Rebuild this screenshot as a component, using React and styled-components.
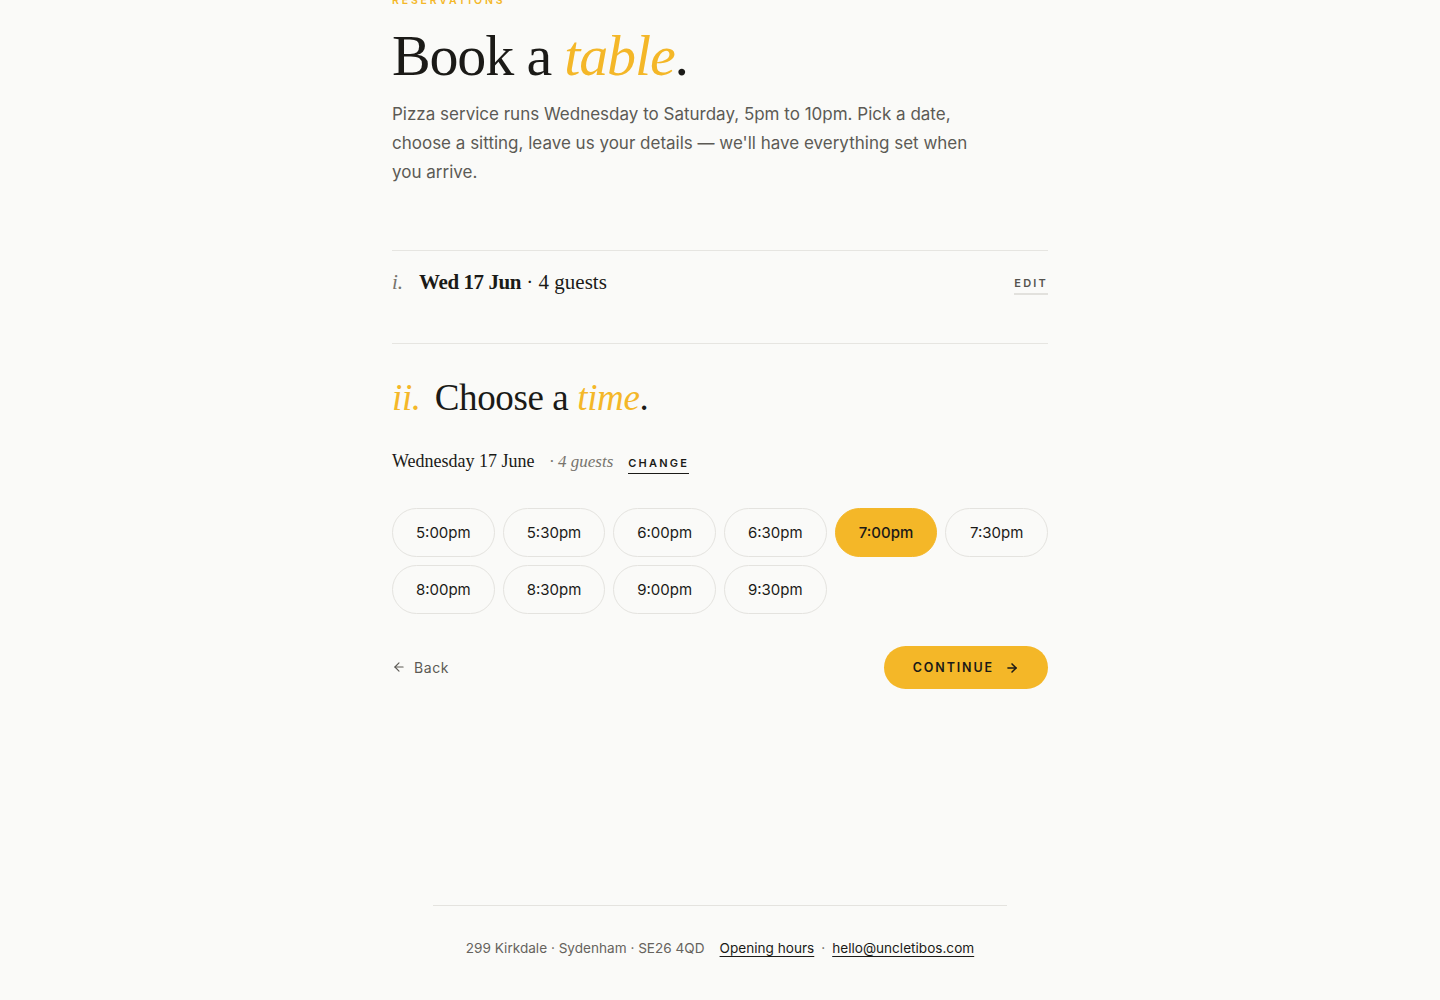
import React, { useState } from "react";
import styled, { createGlobalStyle } from "styled-components";

const ACCENT = "#f4b728";
const INK = "#1b1a17";
const SERIF = `"Liberation Serif", "DejaVu Serif", serif`;
const SANS = `Inter, "Noto Sans", sans-serif`;

const Global = createGlobalStyle`
  html, body { margin: 0; padding: 0; background: #fafaf8; }
  body { font-family: ${SANS}; color: ${INK}; -webkit-font-smoothing: antialiased; }
  * { box-sizing: border-box; }
`;

const Page = styled.div`
  display: flex;
  flex-direction: column;
  align-items: center;
  margin-top: -6px;
`;

const Main = styled.main`
  width: 656px;
  display: flex;
  flex-direction: column;
`;

const Eyebrow = styled.div`
  font-size: 10.5px;
  line-height: 14px;
  font-weight: 600;
  letter-spacing: 0.27em;
  color: ${ACCENT};
  text-transform: uppercase;
`;

const Title = styled.h1`
  margin: 13px 0 0;
  font-family: ${SERIF};
  font-weight: 400;
  font-size: 58px;
  line-height: 70px;
  letter-spacing: -0.02em;
  color: ${INK};
`;

const Accent = styled.em`
  color: ${ACCENT};
  font-style: italic;
`;

const Lead = styled.p`
  margin: 9px 0 0;
  max-width: 590px;
  font-size: 17px;
  line-height: 29px;
  color: #5c5a55;
`;

const Step = styled.section`
  border-top: 1px solid #e6e5e1;
  margin-top: ${(p) => p.$mt || 0}px;
`;

const SummaryRow = styled.div`
  display: flex;
  align-items: center;
  justify-content: space-between;
  padding: 17px 0 47px;
`;

const SummaryText = styled.div`
  display: flex;
  align-items: baseline;
  gap: 16px;
  font-family: ${SERIF};
  font-size: 21px;
  line-height: 28px;
`;

const Numeral = styled.span`
  font-family: ${SERIF};
  font-style: italic;
  color: ${(p) => (p.$accent ? ACCENT : "#77746d")};
`;

const Strong = styled.span`
  font-weight: 700;
  letter-spacing: -0.02em;
`;

const TextLink = styled.button`
  background: none;
  border: none;
  padding: 0 0 3px;
  margin-top: ${(p) => (p.$dark ? 0 : 7)}px;
  cursor: pointer;
  font-family: ${SANS};
  font-size: 11px;
  font-weight: 600;
  letter-spacing: 0.2em;
  text-transform: uppercase;
  color: ${(p) => (p.$dark ? INK : "#55534e")};
  border-bottom: ${(p) => (p.$dark ? `1.5px solid ${INK}` : "2px solid #e2e1dd")};
`;

const StepHead = styled.h2`
  margin: 31px 0 0;
  display: flex;
  align-items: baseline;
  gap: 14px;
  font-family: ${SERIF};
  font-weight: 400;
  font-size: 37px;
  line-height: 46px;
  letter-spacing: -0.01em;
`;

const DateLine = styled.div`
  margin-top: 30px;
  display: flex;
  align-items: baseline;
  gap: 15px;
`;

const DateText = styled.span`
  font-family: ${SERIF};
  font-size: 18px;
  color: ${INK};
`;

const Guests = styled.span`
  font-family: ${SERIF};
  font-style: italic;
  font-size: 17px;
  color: #77746d;
`;

const SlotGrid = styled.div`
  margin-top: 34px;
  display: grid;
  grid-template-columns: repeat(6, 1fr);
  gap: 8px;
`;

const Slot = styled.button`
  height: 49px;
  border-radius: 999px;
  border: 1px solid ${(p) => (p.$active ? ACCENT : "#e4e3df")};
  background: ${(p) => (p.$active ? ACCENT : "transparent")};
  font-family: ${SANS};
  font-size: 15px;
  font-weight: ${(p) => (p.$active ? 500 : 420)};
  color: ${INK};
  cursor: pointer;
`;

const NavRow = styled.div`
  margin-top: 32px;
  display: flex;
  align-items: center;
  justify-content: space-between;
`;

const BackButton = styled.button`
  display: flex;
  align-items: center;
  gap: 8px;
  background: none;
  border: none;
  padding: 0 0 1px;
  font-family: ${SANS};
  font-size: 14px;
  letter-spacing: 0.04em;
  color: #5c5a55;
  cursor: pointer;
`;

const Continue = styled.button`
  display: flex;
  align-items: center;
  gap: 11px;
  height: 43px;
  padding: 0 29px;
  border: none;
  border-radius: 999px;
  background: ${ACCENT};
  font-family: ${SANS};
  font-size: 12.5px;
  font-weight: 600;
  letter-spacing: 0.15em;
  color: ${INK};
  cursor: pointer;
`;

const Footer = styled.footer`
  margin-top: 216px;
  width: 574px;
  border-top: 1px solid #e4e3df;
  padding: 34px 0 44px;
  display: flex;
  justify-content: center;
  align-items: baseline;
  gap: 7px;
  font-size: 13.6px;
  color: #66635d;
`;

const Address = styled.span`
  margin-right: 8px;
`;

const FootLink = styled.a`
  color: ${INK};
  text-decoration: underline;
  text-underline-offset: 3px;
  text-decoration-thickness: 1px;
`;

const Arrow = ({ dir = "right", size = 14 }) => (
  <svg width={size} height={size} viewBox="0 0 24 24" fill="none" stroke="currentColor"
    strokeWidth={dir === "right" ? 2.6 : 2} strokeLinecap="round" strokeLinejoin="round">
    {dir === "right" ? (
      <>
        <path d="M5 12h14" />
        <path d="m12 5 7 7-7 7" />
      </>
    ) : (
      <>
        <path d="M19 12H5" />
        <path d="m12 19-7-7 7-7" />
      </>
    )}
  </svg>
);

const TIMES = ["5:00pm", "5:30pm", "6:00pm", "6:30pm", "7:00pm", "7:30pm", "8:00pm", "8:30pm", "9:00pm", "9:30pm"];

export default function App() {
  const [time, setTime] = useState("7:00pm");
  return (
    <>
      <Global />
      <Page>
        <Main>
          <Eyebrow>Reservations</Eyebrow>
          <Title>
            Book a <Accent>table</Accent>.
          </Title>
          <Lead>
            Pizza service runs Wednesday to Saturday, 5pm to 10pm. Pick a date, choose a sitting, leave us
            your details — we'll have everything set when you arrive.
          </Lead>

          <Step $mt={63}>
            <SummaryRow>
              <SummaryText>
                <Numeral>i.</Numeral>
                <span>
                  <Strong>Wed 17 Jun</Strong> · 4 guests
                </span>
              </SummaryText>
              <TextLink>Edit</TextLink>
            </SummaryRow>
          </Step>

          <Step>
            <StepHead>
              <Numeral $accent>ii.</Numeral>
              <span>
                Choose a <Accent>time</Accent>.
              </span>
            </StepHead>
            <DateLine>
              <DateText>Wednesday 17 June</DateText>
              <Guests>· 4 guests</Guests>
              <TextLink $dark>Change</TextLink>
            </DateLine>
            <SlotGrid>
              {TIMES.map((t) => (
                <Slot key={t} $active={t === time} onClick={() => setTime(t)}>
                  {t}
                </Slot>
              ))}
            </SlotGrid>
            <NavRow>
              <BackButton>
                <Arrow dir="left" size={14} />
                Back
              </BackButton>
              <Continue>
                CONTINUE
                <Arrow dir="right" size={14} />
              </Continue>
            </NavRow>
          </Step>
        </Main>
        <Footer>
          <Address>299 Kirkdale · Sydenham · SE26 4QD</Address>
          <FootLink href="#">Opening hours</FootLink>
          <span>·</span>
          <FootLink href="#">hello@uncletibos.com</FootLink>
        </Footer>
      </Page>
    </>
  );
}
